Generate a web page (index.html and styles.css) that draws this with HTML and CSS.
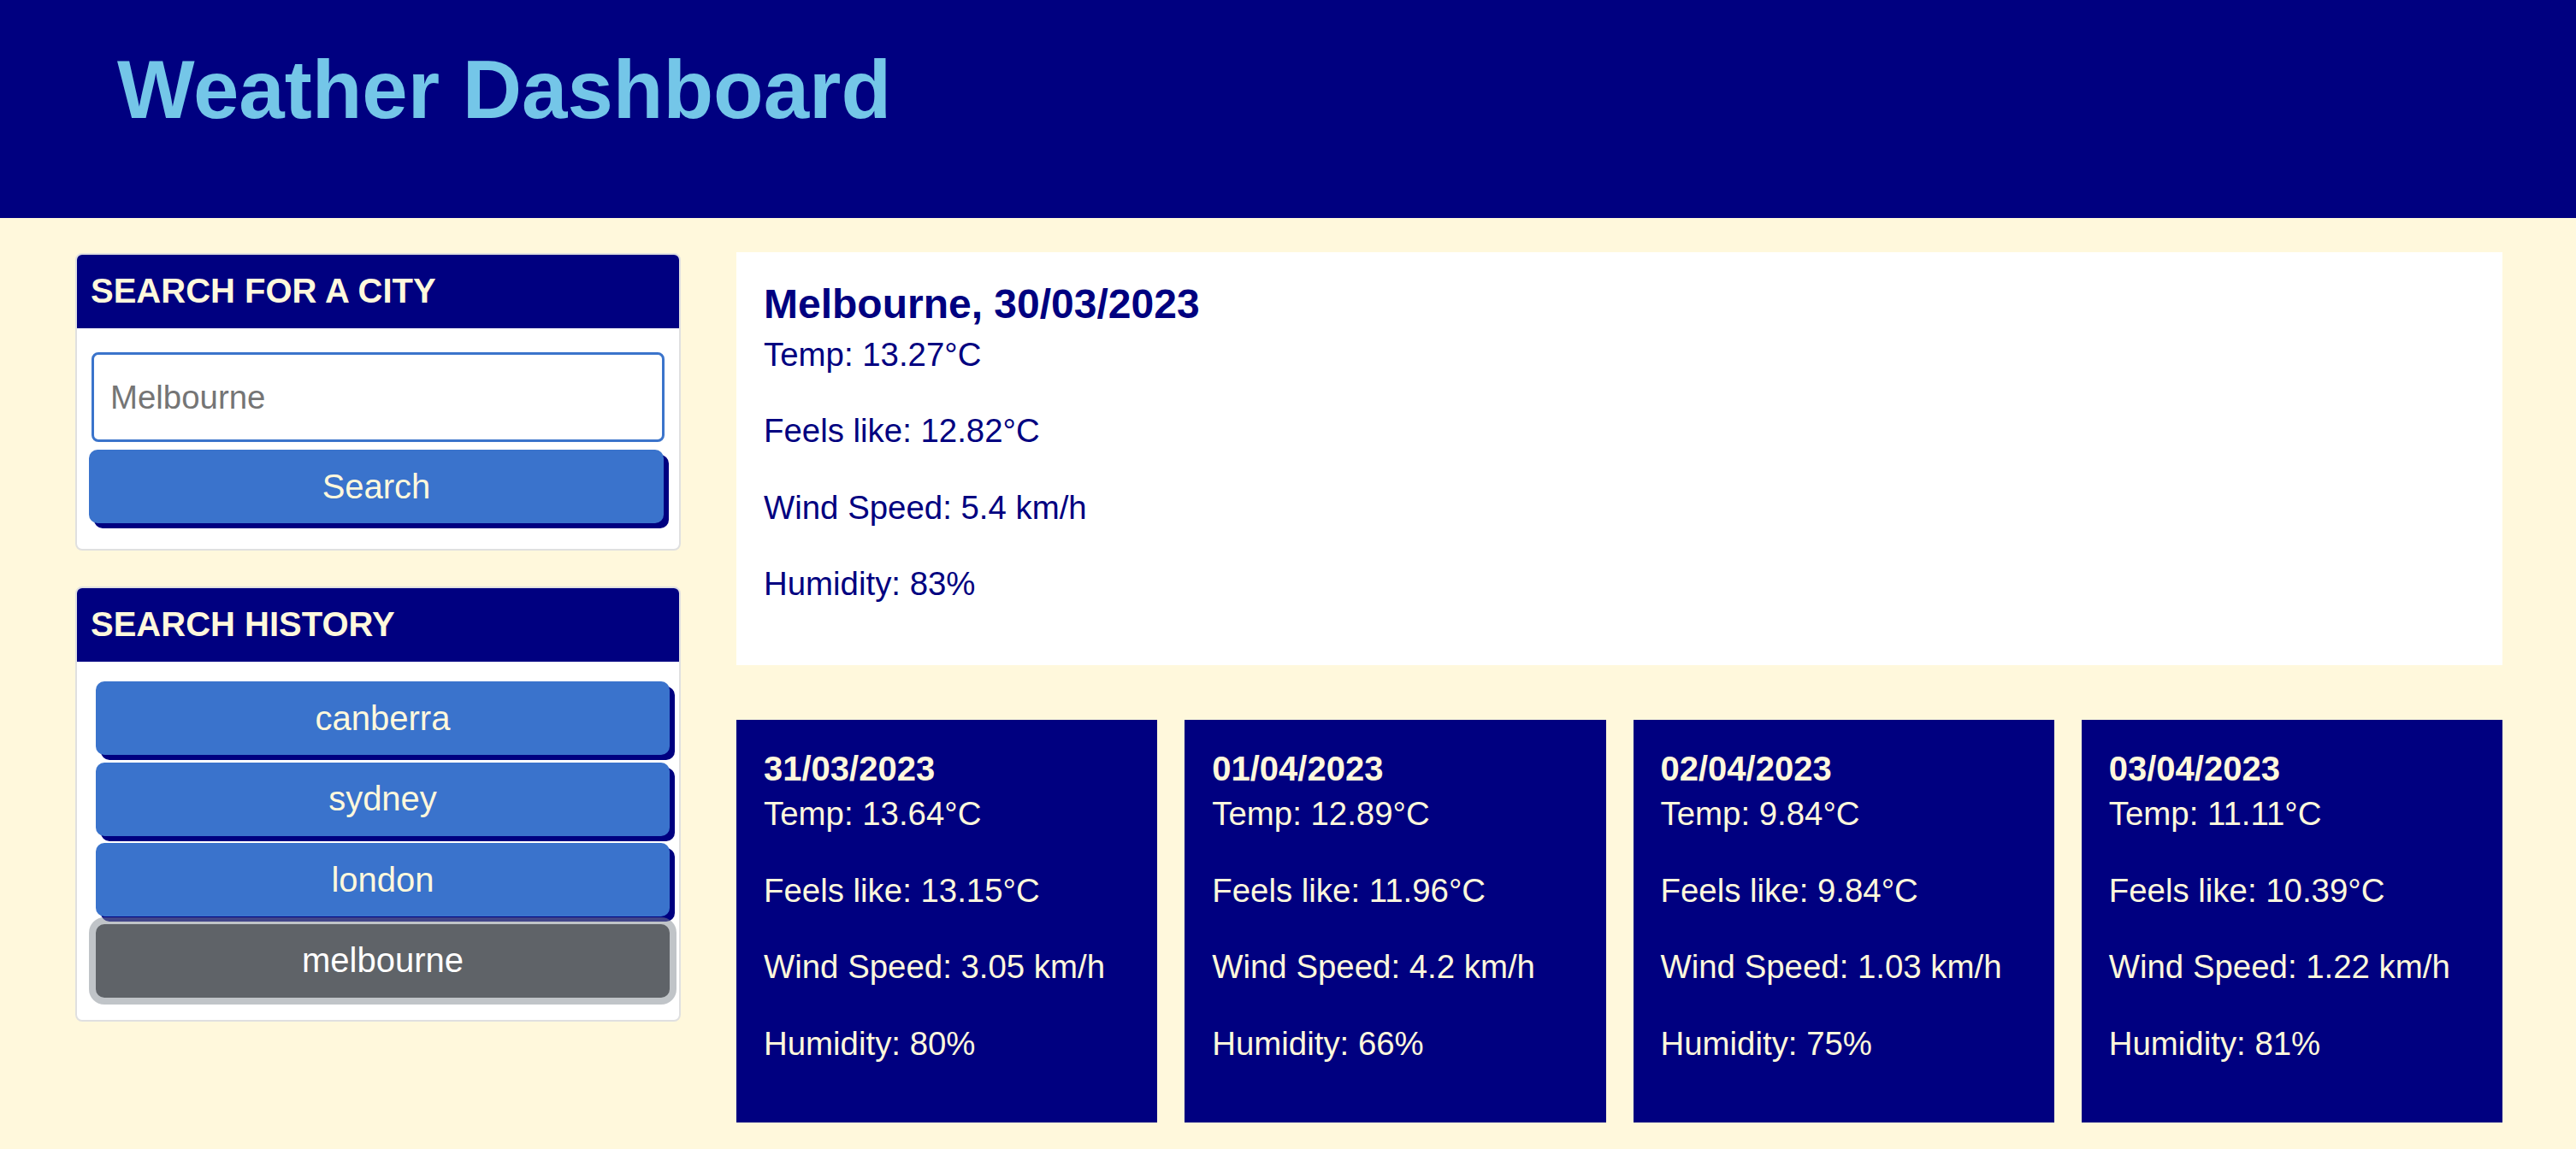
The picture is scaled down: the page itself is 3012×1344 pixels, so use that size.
FILE: index.html
```html
<!DOCTYPE html>
<html lang="en">
<head>
<meta charset="utf-8">
<title>Weather Dashboard</title>
<link rel="stylesheet" href="styles.css">
</head>
<body>
<header class="site-header">
  <h1 class="site-title">Weather Dashboard</h1>
</header>
<main class="layout">
  <aside class="sidebar">
    <section class="panel">
      <h2 class="panel-header">SEARCH FOR A CITY</h2>
      <div class="panel-body search-body">
        <input class="city-input" type="text" placeholder="Melbourne">
        <button class="btn btn-search" type="button">Search</button>
      </div>
    </section>
    <section class="panel">
      <h2 class="panel-header">SEARCH HISTORY</h2>
      <div class="panel-body history-body">
        <button class="btn" type="button">canberra</button>
        <button class="btn" type="button">sydney</button>
        <button class="btn" type="button">london</button>
        <button class="btn btn-active" type="button">melbourne</button>
      </div>
    </section>
  </aside>
  <section class="content">
    <div class="current">
      <h3 class="current-title">Melbourne, 30/03/2023</h3>
      <p>Temp: 13.27°C</p>
      <p>Feels like: 12.82°C</p>
      <p>Wind Speed: 5.4 km/h</p>
      <p>Humidity: 83%</p>
    </div>
    <div class="forecast">
      <div class="day">
        <h5 class="day-date">31/03/2023</h5>
        <p>Temp: 13.64°C</p>
        <p>Feels like: 13.15°C</p>
        <p>Wind Speed: 3.05 km/h</p>
        <p>Humidity: 80%</p>
      </div>
      <div class="day">
        <h5 class="day-date">01/04/2023</h5>
        <p>Temp: 12.89°C</p>
        <p>Feels like: 11.96°C</p>
        <p>Wind Speed: 4.2 km/h</p>
        <p>Humidity: 66%</p>
      </div>
      <div class="day">
        <h5 class="day-date">02/04/2023</h5>
        <p>Temp: 9.84°C</p>
        <p>Feels like: 9.84°C</p>
        <p>Wind Speed: 1.03 km/h</p>
        <p>Humidity: 75%</p>
      </div>
      <div class="day">
        <h5 class="day-date">03/04/2023</h5>
        <p>Temp: 11.11°C</p>
        <p>Feels like: 10.39°C</p>
        <p>Wind Speed: 1.22 km/h</p>
        <p>Humidity: 81%</p>
      </div>
    </div>
  </section>
</main>
</body>
</html>
```

FILE: styles.css
```css
* {
  box-sizing: border-box;
}

body {
  margin: 0;
  background: #fff8dc;
  font-family: "Liberation Sans", Arial, Helvetica, sans-serif;
}

.site-header {
  background: #000080;
  height: 255px;
  padding: 47px 0 0 137px;
}

.site-title {
  margin: 0;
  font-size: 96px;
  line-height: 1.2;
  font-weight: bold;
  color: #74c6e8;
}

.layout {
  display: flex;
  align-items: flex-start;
  gap: 65px;
  padding: 40px 86px 0 88px;
}

.sidebar {
  flex: none;
  width: 708px;
  margin-top: 1px;
  display: flex;
  flex-direction: column;
  gap: 42px;
}

.panel {
  background: #fff;
  border: 2px solid #e0e0e0;
  border-radius: 8px;
}

.panel-header {
  margin: 0;
  background: #000080;
  color: #fff8dc;
  font-size: 40px;
  line-height: 48px;
  font-weight: bold;
  padding: 18px 16px 20px;
  border-radius: 6px 6px 0 0;
}

.panel-body {
  display: flex;
  flex-direction: column;
}

.search-body {
  padding: 28px 0 30px;
}

.city-input {
  margin: 0 17px;
  height: 105px;
  border: 3px solid #3b74cb;
  border-radius: 8px;
  padding: 0 19px;
  font-family: inherit;
  font-size: 38.4px;
  color: #495057;
  background: #fff;
  outline: none;
}

.city-input::placeholder {
  color: #757575;
}

.btn {
  height: 86px;
  border: none;
  border-radius: 10px;
  background: #3a73cc;
  color: #fff8dc;
  font-family: inherit;
  font-size: 40px;
  padding: 0;
  box-shadow: 6px 6px 0 #000080;
  cursor: pointer;
}

.btn-search {
  margin: 9px 18px 0 14px;
}

.history-body {
  padding: 23px 11px 26px 22px;
  gap: 8.5px;
}

.btn-active {
  background: #5f6368;
  color: #ffffff;
  box-shadow: 0 0 0 8px rgba(130, 138, 145, 0.5);
}

.content {
  flex: 1;
  display: flex;
  flex-direction: column;
  gap: 64px;
}

.current {
  background: #fff;
  color: #000080;
  padding: 32px 32px 34px;
}

.current-title {
  margin: 0 0 1px;
  font-size: 48px;
  line-height: 1.2;
  font-weight: bold;
}

.current p,
.day p {
  margin: 0 0 32px;
  font-size: 38.4px;
  line-height: 1.5;
}

.forecast {
  display: grid;
  grid-template-columns: repeat(4, 1fr);
  gap: 32px;
}

.day {
  background: #000080;
  color: #fff8dc;
  padding: 33px 32px 32px;
}

.day-date {
  margin: 0;
  font-size: 40px;
  line-height: 1.2;
  font-weight: bold;
}
```
